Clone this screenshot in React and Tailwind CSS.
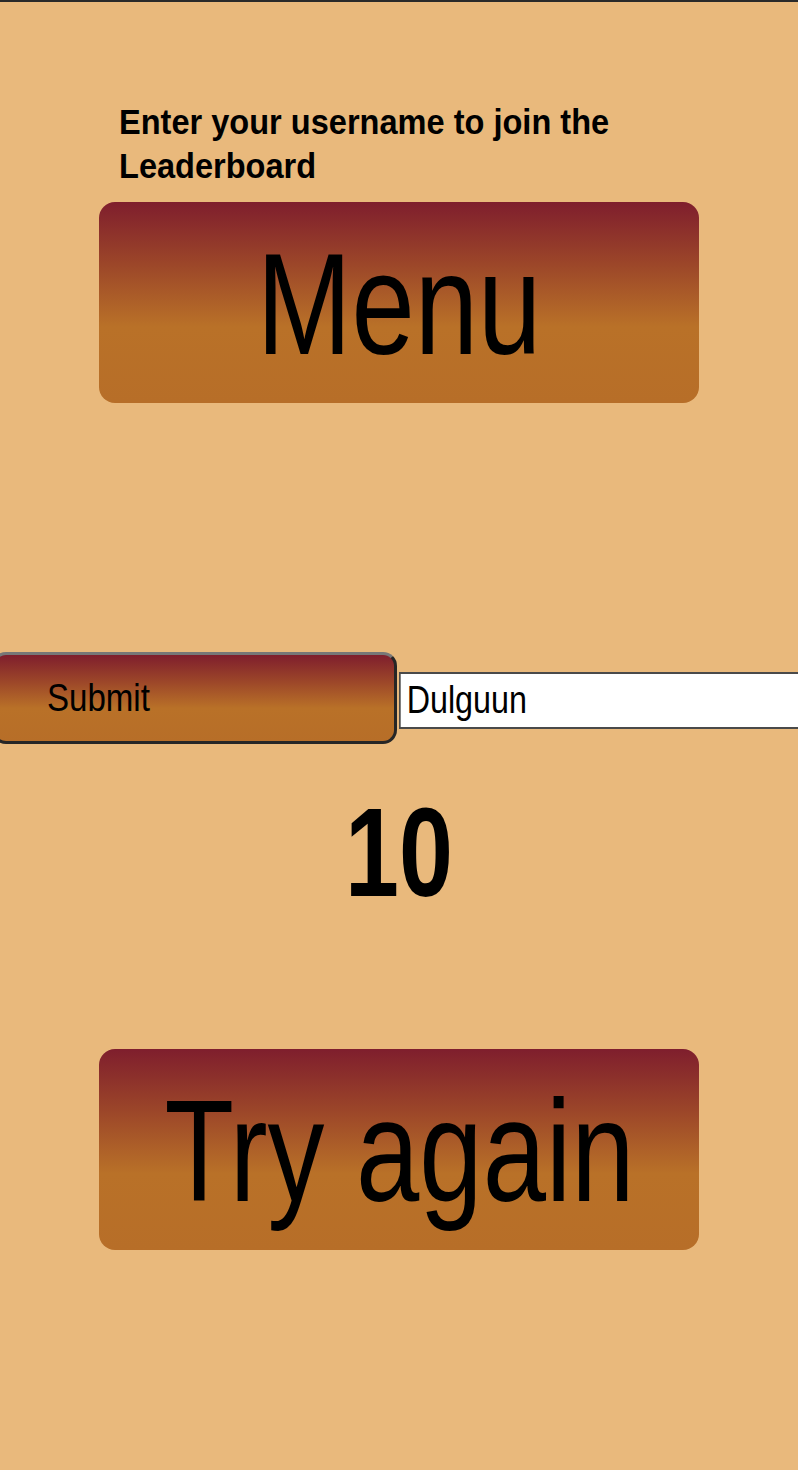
import React, { useState } from 'react';

const btnGrad = 'bg-[linear-gradient(to_bottom,#7f1e2d_0%,#9b4529_30%,#b97128_62%,#b76e28_100%)]';

const App = () => {
  const [name, setName] = useState('Dulguun');

  return (
    <div className="min-h-[1470px] w-full bg-[#e9b97c] border-t-2 border-[#2a2a2a] overflow-hidden font-['Liberation_Sans',Arial,sans-serif] text-black">
      <div className="flex flex-col items-center pt-[98px]">
        <div className="w-[600px] pl-[20px]">
          <h2 className="text-[35px] font-bold leading-[44px] whitespace-nowrap">
            <span className="inline-block origin-left scale-x-[0.93]">Enter your username to join the</span>
            <br />
            <span className="inline-block origin-left scale-x-[0.93]">Leaderboard</span>
          </h2>
        </div>

        <button className={`mt-[14px] w-[600px] h-[201px] rounded-[16px] ${btnGrad} text-[144px] leading-none pt-[4px] flex items-center justify-center`}>
          <span className="inline-block scale-x-[0.79]">Menu</span>
        </button>
      </div>

      <div className="flex items-start mt-[249px]">
        <button
          className={`-ml-[8px] w-[405px] h-[92px] shrink-0 rounded-[14px] border-[3px] border-[#262626] border-t-[#777777] ${btnGrad} text-[38px] leading-none flex items-center pl-[52px]`}
        >
          <span className="inline-block origin-left scale-x-[0.87]">Submit</span>
        </button>
        <div className="mt-[20px] ml-[2px] w-[460px] shrink-0">
          <input
            value={name}
            onChange={(e) => setName(e.target.value)}
            className="w-[540px] h-[57px] origin-left scale-x-[0.85] bg-white border-2 border-[#4a4a4a] pl-[7px] text-[38px] outline-none"
          />
        </div>
      </div>

      <div className="flex justify-center mt-[46px]">
        <span className="inline-block scale-x-[0.77] text-[126px] font-bold leading-none">10</span>
      </div>

      <div className="flex justify-center mt-[133px]">
        <button className={`w-[600px] h-[201px] rounded-[16px] ${btnGrad} text-[144px] leading-none pt-[4px] flex items-center justify-center`}>
          <span className="inline-block scale-x-[0.79] whitespace-nowrap">Try again</span>
        </button>
      </div>
    </div>
  );
};

export default App;
